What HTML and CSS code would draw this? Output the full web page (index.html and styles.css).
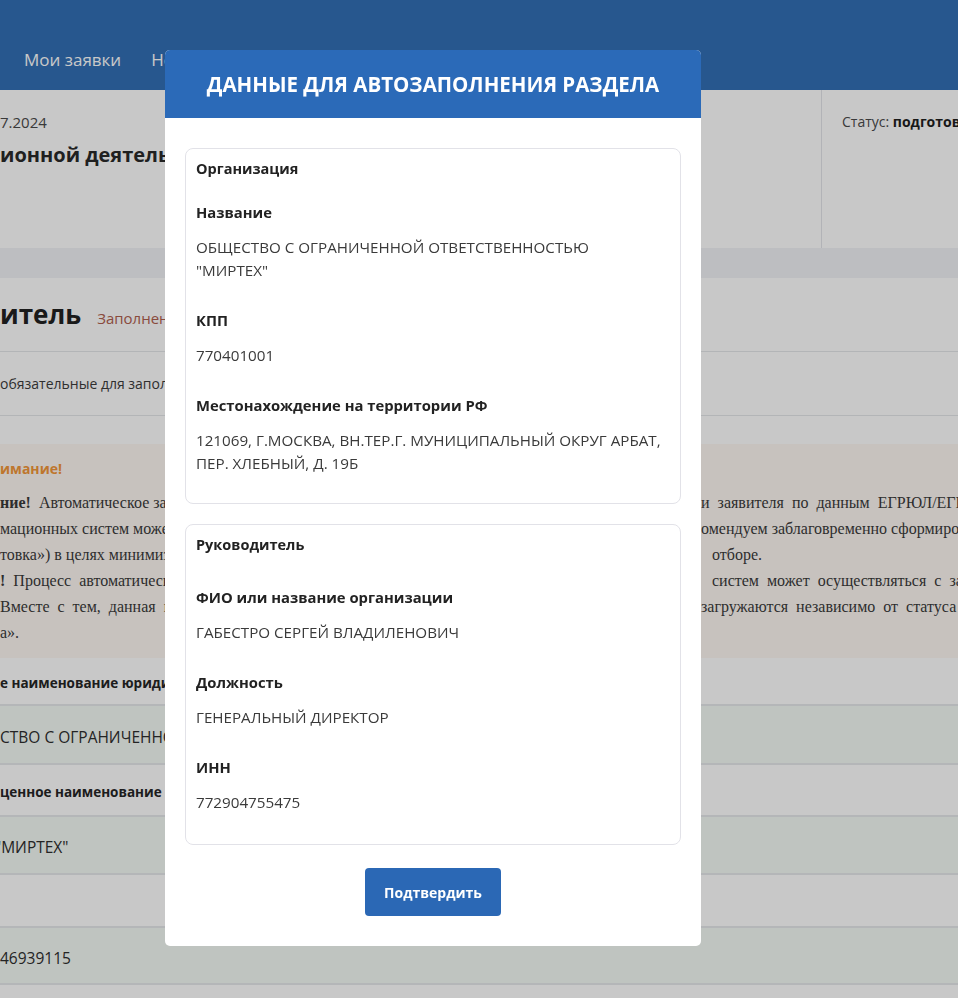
FILE: index.html
```html
<!DOCTYPE html>
<html lang="ru">
<head>
<meta charset="utf-8">
<title>Данные для автозаполнения раздела</title>
<link rel="stylesheet" href="styles.css">
</head>
<body>
<div class="page">
  <header class="topbar">
    <nav class="nav">
      <a class="nav-link">Мои заявки</a>
      <a class="nav-link">Новости</a>
    </nav>
  </header>

  <section class="info">
    <div class="info-main">
      <div class="info-date">7.2024</div>
      <div class="info-title">ионной деятельности</div>
    </div>
    <div class="info-status">Статус: <b>подготовка</b></div>
  </section>

  <div class="strip"></div>

  <section class="section-head">
    <h2 class="section-title">итель</h2>
    <span class="section-state">Заполнено частично</span>
  </section>

  <div class="note-row">обязательные для заполнения поля отмечены звёздочкой</div>
  <div class="spacer"></div>

  <section class="warning">
    <div class="warning-title">имание!</div>
    <div class="warning-line"><span class="wl-left"><b>ние!</b>&nbsp; Автоматическое заполнение</span><span class="wl-right">и&nbsp; заявителя&nbsp; по&nbsp; данным&nbsp; ЕГРЮЛ/ЕГРИП</span></div>
    <div class="warning-line"><span class="wl-left">мационных систем может занимать</span><span class="wl-right">омендуем заблаговременно сформировать</span></div>
    <div class="warning-line"><span class="wl-left">товка») в целях минимизации рисков</span><span class="wl-right wl-pad">отборе.</span></div>
    <div class="warning-line"><span class="wl-left"><b>!</b>&nbsp; Процесс&nbsp; автоматического</span><span class="wl-right wl-pad">систем&nbsp; может&nbsp; осуществляться&nbsp; с&nbsp; задержкой</span></div>
    <div class="warning-line"><span class="wl-left">Вместе&nbsp; с&nbsp; тем,&nbsp; данная&nbsp; информация</span><span class="wl-right">загружаются&nbsp; независимо&nbsp; от&nbsp; статуса</span></div>
    <div class="warning-line"><span class="wl-left">а».</span><span class="wl-right"></span></div>
  </section>

  <div class="row row-label row-h48"><b>е наименование юридического лица</b></div>
  <div class="row row-value row-h58">СТВО С ОГРАНИЧЕННОЙ ОТВЕТСТВЕННОСТЬЮ "МИРТЕХ"</div>
  <div class="row row-label row-h51"><b>ценное наименование юридического лица</b></div>
  <div class="row row-value row-h57"><span class="cut">"МИРТЕХ"</span></div>
  <div class="row row-label row-h52"></div>
  <div class="row row-value row-h56">46939115</div>
  <div class="row row-label row-h48"></div>
</div>

<div class="overlay"></div>

<div class="modal" role="dialog">
  <div class="modal-head">Данные для автозаполнения раздела</div>
  <div class="modal-body">
    <div class="card">
      <div class="card-title">Организация</div>
      <div class="field-label">Название</div>
      <div class="field-value">ОБЩЕСТВО С ОГРАНИЧЕННОЙ ОТВЕТСТВЕННОСТЬЮ<br>"МИРТЕХ"</div>
      <div class="field-label">КПП</div>
      <div class="field-value">770401001</div>
      <div class="field-label">Местонахождение на территории РФ</div>
      <div class="field-value">121069, Г.МОСКВА, ВН.ТЕР.Г. МУНИЦИПАЛЬНЫЙ ОКРУГ АРБАТ,<br>ПЕР. ХЛЕБНЫЙ, Д. 19Б</div>
    </div>
    <div class="card card-tall">
      <div class="card-title card-title-spaced">Руководитель</div>
      <div class="field-label">ФИО или название организации</div>
      <div class="field-value">ГАБЕСТРО СЕРГЕЙ ВЛАДИЛЕНОВИЧ</div>
      <div class="field-label">Должность</div>
      <div class="field-value">ГЕНЕРАЛЬНЫЙ ДИРЕКТОР</div>
      <div class="field-label">ИНН</div>
      <div class="field-value">772904755475</div>
    </div>
    <div class="actions">
      <button class="btn" type="button">Подтвердить</button>
    </div>
  </div>
</div>
</body>
</html>
```
FILE: styles.css
```css
* { box-sizing: border-box; }

html, body {
  margin: 0;
  height: 998px;
  overflow: hidden;
}

body {
  font-family: "Open Sans", "Noto Sans", sans-serif;
  font-size: 14px;
  color: #2e2e2e;
  background: #ffffff;
}

.page {
  width: 958px;
}

/* top bar */
.topbar {
  height: 90px;
  background: #326fb6;
}

.nav {
  display: flex;
  gap: 30px;
  padding: 48px 0 0 24px;
}

.nav-link {
  color: #ffffff;
  font-size: 17px;
  line-height: 24px;
  text-decoration: none;
}

/* info block */
.info {
  display: grid;
  grid-template-columns: 822px 1fr;
  height: 158px;
}

.info-main {
  border-right: 1px solid #e3e5ea;
  padding-top: 22px;
}

.info-date {
  font-size: 15px;
  line-height: 20px;
  color: #4a4a4a;
}

.info-title {
  margin-top: 9px;
  font-size: 20px;
  line-height: 28px;
  font-weight: 700;
  color: #2a2a2a;
}

.info-status {
  padding: 22px 0 0 20px;
  font-size: 14px;
  line-height: 20px;
  color: #4a4a4a;
  white-space: nowrap;
  overflow: hidden;
}

.info-status b {
  color: #1f1f1f;
}

.strip {
  height: 30px;
  background: #f1f2f6;
}

/* section heading */
.section-head {
  height: 74px;
  display: flex;
  align-items: baseline;
  gap: 16px;
  padding-top: 16px;
  border-bottom: 1px solid #e5e7ea;
}

.section-title {
  margin: 0;
  font-size: 26px;
  line-height: 40px;
  font-weight: 700;
  color: #222222;
}

.section-state {
  font-size: 15px;
  color: #b0604e;
}

.note-row {
  height: 64px;
  display: flex;
  align-items: center;
  font-size: 14px;
  color: #3c3c3c;
  border-bottom: 1px solid #e5e7ea;
  white-space: nowrap;
}

.spacer {
  height: 28px;
}

/* warning */
.warning {
  height: 214px;
  background: #fef8f3;
  padding-top: 14px;
}

.warning-title {
  font-size: 14px;
  line-height: 22px;
  font-weight: 700;
  color: #f3973a;
  margin-bottom: 10px;
}

.warning-line {
  display: grid;
  grid-template-columns: 701px 1fr;
  font-family: "Liberation Serif", "Times New Roman", serif;
  font-size: 16px;
  line-height: 26px;
  color: #3a3a3a;
  white-space: nowrap;
  overflow: hidden;
}

.wl-left,
.wl-right {
  overflow: hidden;
}

.wl-pad {
  padding-left: 11px;
}

/* rows */
.row {
  display: flex;
  align-items: center;
  padding-top: 4px;
  font-size: 15.5px;
  color: #2e2e2e;
  white-space: nowrap;
  border-bottom: 2px solid #e6e8eb;
}

.row-label { background: #ffffff; }
.row-value { background: #f4faf5; }

.row-h48 { height: 48px; }
.row-h51 { height: 52px; }
.row-h52 { height: 53px; }
.row-h56 { height: 57px; }
.row-h57 { height: 58px; }
.row-h58 { height: 59px; }

.row-label b {
  font-size: 13.5px;
  color: #262626;
}

.cut {
  margin-left: -5px;
}

/* overlay + modal */
.overlay {
  position: fixed;
  inset: 0;
  background: rgba(0, 0, 0, 0.216);
}

.modal {
  position: fixed;
  left: 165px;
  top: 50px;
  width: 536px;
  background: #ffffff;
  border-radius: 5px;
  overflow: hidden;
}

.modal-head {
  height: 68px;
  display: flex;
  align-items: center;
  justify-content: center;
  background: #2b6ab8;
  color: #ffffff;
  font-size: 20.5px;
  font-weight: 700;
  text-transform: uppercase;
}

.modal-body {
  padding: 30px 20px 30px;
  display: flex;
  flex-direction: column;
  gap: 20px;
}

.card {
  border: 1px solid #e2e2e8;
  border-radius: 8px;
  padding: 8px 10px 1px;
}

.card-tall {
  padding-bottom: 3px;
}

.card-title {
  font-size: 14.5px;
  line-height: 23px;
  font-weight: 700;
  color: #222222;
  margin-bottom: 21px;
}

.card-title-spaced {
  margin-bottom: 30px;
}

.field-label {
  font-size: 14.8px;
  line-height: 23px;
  font-weight: 700;
  color: #222222;
  margin-bottom: 12px;
}

.field-value {
  font-size: 15.2px;
  line-height: 23px;
  color: #3a3a3a;
  margin-bottom: 27px;
  white-space: nowrap;
}

.actions {
  display: flex;
  justify-content: center;
  padding-top: 3px;
}

.btn {
  width: 136px;
  height: 48px;
  border: 0;
  border-radius: 4px;
  background: #2b68b5;
  color: #ffffff;
  font-family: inherit;
  font-size: 14px;
  font-weight: 700;
}
```
